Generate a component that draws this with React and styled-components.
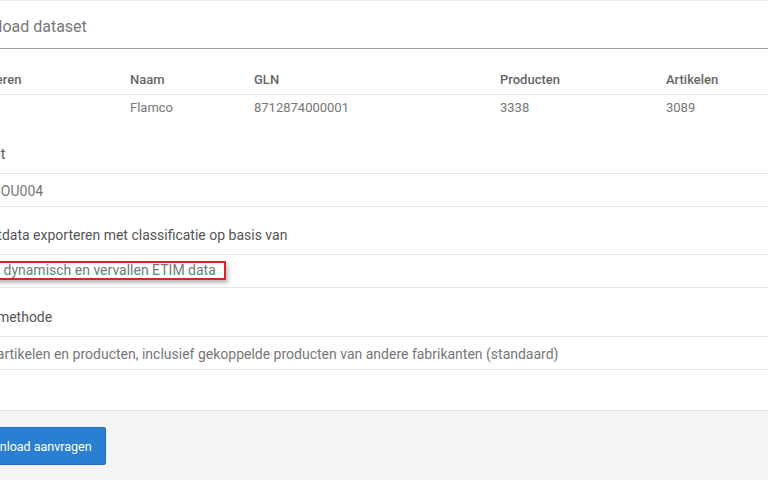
import React from "react";
import styled, { createGlobalStyle } from "styled-components";

const Global = createGlobalStyle`
  html, body { margin: 0; padding: 0; background: #fff; overflow: hidden; }
  body { font-family: Roboto, "Noto Sans", Arial, sans-serif; }
  * { box-sizing: border-box; }
`;

const Modal = styled.div`
  margin-left: -42px;
  width: calc(100% + 42px);
  height: 480px;
  display: flex;
  flex-direction: column;
  border-top: 1px solid #ececec;
  background: #fff;
`;

const Header = styled.div`
  height: 48px;
  padding-top: 3px;
  display: flex;
  align-items: center;
  border-bottom: 1px solid #a3a3a3;
`;

const Title = styled.h4`
  margin: 0;
  font-size: 16px;
  font-weight: 400;
  color: #777;
  white-space: nowrap;
`;

const Body = styled.div`
  padding-bottom: 40px;
`;

const Grid = styled.div`
  display: grid;
  grid-template-columns: 172px 124px 246px 166px 1fr;
`;

const Cell = styled.div`
  font-size: 13px;
  line-height: 17px;
  white-space: nowrap;
  color: ${(p) => (p.$head ? "#666" : "#777")};
  font-weight: ${(p) => (p.$head ? 500 : 400)};
  padding: ${(p) => (p.$head ? "22px 0 6px" : "4px 0 0")};
  border-bottom: ${(p) => (p.$head ? "1px solid #e8e8e8" : "none")};
`;

const FieldGroup = styled.div`
  margin-top: ${(p) => (p.$first ? "28px" : "18px")};
  &:last-child {
    margin-top: 19px;
  }
`;

const Label = styled.div`
  margin-left: -5px;
  font-size: 14px;
  line-height: 20px;
  color: #555;
  margin-bottom: 9px;
  white-space: nowrap;
`;

const Value = styled.div`
  height: 34px;
  border-top: 1px solid #e6e6e6;
  border-bottom: 1px solid #e6e6e6;
  padding: 2px 0 0 12px;
  display: flex;
  align-items: center;
  font-size: 14px;
  color: #777;
  white-space: nowrap;
`;

const Marked = styled.span`
  display: inline-block;
  margin-left: -8px;
  margin-top: -3px;
  padding: 0 8px;
  line-height: 15px;
  border: 2px solid #d8232a;
  box-shadow: 2px 3px 4px rgba(0, 0, 0, 0.28);
`;

const Footer = styled.div`
  flex: 1;
  background: #f4f4f4;
  border-top: 1px solid #e2e2e2;
  padding: 16px 0 0 3px;
`;

const Button = styled.button`
  height: 38px;
  padding: 0 13px;
  border: 1px solid #1f6fc0;
  border-radius: 2px;
  background: #2a7fd2;
  color: #fff;
  font-family: Roboto, "Noto Sans", Arial, sans-serif;
  font-size: 12.5px;
  font-weight: 400;
  white-space: nowrap;
`;

const columns = ["Exporteren", "Naam", "GLN", "Producten", "Artikelen"];
const row = ["", "Flamco", "8712874000001", "3338", "3089"];

export default function App() {
  return (
    <>
      <Global />
      <Modal>
        <Header>
          <Title>Download dataset</Title>
        </Header>
        <Body>
          <Grid>
            {columns.map((c) => (
              <Cell $head key={c}>{c}</Cell>
            ))}
            {row.map((c, i) => (
              <Cell key={i}>{c}</Cell>
            ))}
          </Grid>
          <FieldGroup $first>
            <Label>Formaat</Label>
            <Value>INSBOU004</Value>
          </FieldGroup>
          <FieldGroup>
            <Label>Productdata exporteren met classificatie op basis van</Label>
            <Value>
              <Marked>Vast dynamisch en vervallen ETIM data</Marked>
            </Value>
          </FieldGroup>
          <FieldGroup>
            <Label>Export methode</Label>
            <Value>
              Alle artikelen en producten, inclusief gekoppelde producten van andere fabrikanten (standaard)
            </Value>
          </FieldGroup>
        </Body>
        <Footer>
          <Button>Download aanvragen</Button>
        </Footer>
      </Modal>
    </>
  );
}
